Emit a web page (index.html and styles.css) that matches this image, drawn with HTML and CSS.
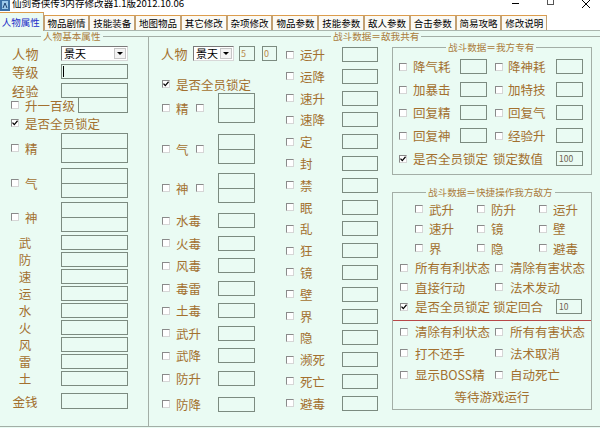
FILE: index.html
```html
<!DOCTYPE html>
<html lang="zh-CN">
<head>
  <meta charset="UTF-8" />
  <title>仙剑奇侠传3内存修改器</title>
  <link rel="stylesheet" href="styles.css">
</head>
<body>
  <div class="titlebar">
    <svg class="app-icon" width="10" height="11" viewBox="0 0 10 11">
      <rect width="10" height="11" fill="#3b6fa6"/>
      <rect x="2" y="1" width="6" height="8" fill="#9cc8ea"/>
      <path d="M3 8 5 3 7 8" stroke="#1d3f6e" fill="none"/>
    </svg>
    <span class="title">仙剑奇侠传3内存修改器1.1版2012.10.06</span>
    <div class="winbtns">
      <svg width="36" height="11"><path d="M12 3.5h7" stroke="#000"/></svg>
      <svg width="36" height="11"><rect x="11.5" y="-3.5" width="6" height="8" fill="none" stroke="#555"/></svg>
      <svg width="28" height="11"><path d="M10 0 18 8M18 0 10 8" stroke="#000"/></svg>
    </div>
  </div>

  <div class="tabs">
    <div class="tab active">人物属性</div>
    <div class="tab">物品剧情</div>
    <div class="tab">技能装备</div>
    <div class="tab">地图物品</div>
    <div class="tab">其它修改</div>
    <div class="tab">杂项修改</div>
    <div class="tab">物品参数</div>
    <div class="tab">技能参数</div>
    <div class="tab">敌人参数</div>
    <div class="tab">合击参数</div>
    <div class="tab">简易攻略</div>
    <div class="tab">修改说明</div>
  </div>

  <div class="panel">
    <fieldset class="grp base">
      <legend>人物基本属性</legend>
      <div class="base-body">
        <div class="row"><span class="name">人物</span><div class="combo w67"><span>景天</span><i class="drop"></i></div></div>
        <div class="row mt3"><span class="name">等级</span><div class="box w67"><i class="caret"></i></div></div>
        <div class="row mt4"><span class="name">经验</span><div class="box w67"></div></div>
        <div class="row up"><span class="cb"></span><span class="lbl">升一百级</span><div class="box"></div></div>
        <div class="row h16 mt2"><span class="cb on"><svg width="6" height="6"><path d="M.5 2.6 2.3 4.6 5.6.8" fill="none" stroke="#000" stroke-width="1.3"/></svg></span><span class="lbl">是否全员锁定</span></div>
        <div class="row pair mt2"><span class="cb"></span><span class="lbl">精</span><div class="dbl w67"><i></i><i></i></div></div>
        <div class="row pair mt5"><span class="cb"></span><span class="lbl">气</span><div class="dbl w67"><i></i><i></i></div></div>
        <div class="row pair mt4"><span class="cb"></span><span class="lbl">神</span><div class="dbl w67"><i></i><i></i></div></div>
        <div class="row stat mt3"><span class="lbl">武</span><div class="box w67"></div></div>
        <div class="row stat mt2"><span class="lbl">防</span><div class="box w67"></div></div>
        <div class="row stat mt2"><span class="lbl">速</span><div class="box w67"></div></div>
        <div class="row stat mt2"><span class="lbl">运</span><div class="box w67"></div></div>
        <div class="row stat mt2"><span class="lbl">水</span><div class="box w67"></div></div>
        <div class="row stat mt2"><span class="lbl">火</span><div class="box w67"></div></div>
        <div class="row stat mt2"><span class="lbl">风</span><div class="box w67"></div></div>
        <div class="row stat mt2"><span class="lbl">雷</span><div class="box w67"></div></div>
        <div class="row stat mt2"><span class="lbl">土</span><div class="box w67"></div></div>
        <div class="row stat h16 mt7"><span class="lbl">金钱</span><div class="box w67"></div></div>
      </div>
    </fieldset>

    <fieldset class="grp battle">
      <legend>战斗数据＝敌我共有</legend>
      <div class="battle-body">
        <div class="mid">
          <div class="row"><span class="name">人物</span><div class="combo c-role"><span>景天</span><i class="drop"></i></div><div class="box v5"><span class="val">5</span></div><div class="box v0"><span class="val">0</span></div></div>
          <div class="row h16 lock"><span class="cb on"><svg width="6" height="6"><path d="M.5 2.6 2.3 4.6 5.6.8" fill="none" stroke="#000" stroke-width="1.3"/></svg></span><span class="lbl">是否全员锁定</span></div>
          <div class="row pair mt1"><span class="cb"></span><span class="lbl">精</span><span class="cb cb2"></span><div class="dbl"><i></i><i></i></div></div>
          <div class="row pair mt11"><span class="cb"></span><span class="lbl">气</span><span class="cb cb2"></span><div class="dbl"><i></i><i></i></div></div>
          <div class="row pair mt9"><span class="cb"></span><span class="lbl">神</span><span class="cb cb2"></span><div class="dbl"><i></i><i></i></div></div>
          <div class="row one mt10"><span class="cb"></span><span class="lbl">水毒</span><div class="box"></div></div>
          <div class="row one"><span class="cb"></span><span class="lbl">火毒</span><div class="box"></div></div>
          <div class="row one"><span class="cb"></span><span class="lbl">风毒</span><div class="box"></div></div>
          <div class="row one"><span class="cb"></span><span class="lbl">毒雷</span><div class="box"></div></div>
          <div class="row one"><span class="cb"></span><span class="lbl">土毒</span><div class="box"></div></div>
          <div class="row one"><span class="cb"></span><span class="lbl">武升</span><div class="box"></div></div>
          <div class="row one"><span class="cb"></span><span class="lbl">武降</span><div class="box"></div></div>
          <div class="row one"><span class="cb"></span><span class="lbl">防升</span><div class="box"></div></div>
          <div class="row one mt11"><span class="cb"></span><span class="lbl">防降</span><div class="box"></div></div>
        </div>

        <div class="state">
          <div class="row"><span class="cb"></span><span class="lbl">运升</span><div class="box"></div></div>
          <div class="row"><span class="cb"></span><span class="lbl">运降</span><div class="box"></div></div>
          <div class="row"><span class="cb"></span><span class="lbl">速升</span><div class="box"></div></div>
          <div class="row"><span class="cb"></span><span class="lbl">速降</span><div class="box"></div></div>
          <div class="row"><span class="cb"></span><span class="lbl">定</span><div class="box"></div></div>
          <div class="row"><span class="cb"></span><span class="lbl">封</span><div class="box"></div></div>
          <div class="row"><span class="cb"></span><span class="lbl">禁</span><div class="box"></div></div>
          <div class="row"><span class="cb"></span><span class="lbl">眠</span><div class="box"></div></div>
          <div class="row"><span class="cb"></span><span class="lbl">乱</span><div class="box"></div></div>
          <div class="row"><span class="cb"></span><span class="lbl">狂</span><div class="box"></div></div>
          <div class="row"><span class="cb"></span><span class="lbl">镜</span><div class="box"></div></div>
          <div class="row"><span class="cb"></span><span class="lbl">壁</span><div class="box"></div></div>
          <div class="row"><span class="cb"></span><span class="lbl">界</span><div class="box"></div></div>
          <div class="row"><span class="cb"></span><span class="lbl">隐</span><div class="box"></div></div>
          <div class="row"><span class="cb"></span><span class="lbl">濒死</span><div class="box"></div></div>
          <div class="row"><span class="cb"></span><span class="lbl">死亡</span><div class="box"></div></div>
          <div class="row"><span class="cb"></span><span class="lbl">避毒</span><div class="box"></div></div>
        </div>

        <div class="side">
          <fieldset class="grp sub own">
            <legend>战斗数据＝我方专有</legend>
            <div class="own-body">
              <div class="row"><span class="cb"></span><span class="lbl">降气耗</span><div class="box"></div><span class="cb"></span><span class="lbl r">降神耗</span><div class="box"></div></div>
              <div class="row"><span class="cb"></span><span class="lbl">加暴击</span><div class="box"></div><span class="cb"></span><span class="lbl r">加特技</span><div class="box"></div></div>
              <div class="row"><span class="cb"></span><span class="lbl">回复精</span><div class="box"></div><span class="cb"></span><span class="lbl r">回复气</span><div class="box"></div></div>
              <div class="row"><span class="cb"></span><span class="lbl">回复神</span><div class="box"></div><span class="cb"></span><span class="lbl r">经验升</span><div class="box"></div></div>
              <div class="row"><span class="cb on"><svg width="6" height="6"><path d="M.5 2.6 2.3 4.6 5.6.8" fill="none" stroke="#000" stroke-width="1.3"/></svg></span><span class="lbl lk">是否全员锁定</span><span class="lk2">锁定数值</span><div class="box"><span class="val num">100</span></div></div>
            </div>
          </fieldset>

          <fieldset class="grp sub quick">
            <legend>战斗数据＝快捷操作我方敌方</legend>
            <div class="quick-body">
              <div class="row three"><span class="cell"><span class="cb"></span><span class="lbl">武升</span></span><span class="cell"><span class="cb"></span><span class="lbl">防升</span></span><span class="cell"><span class="cb"></span><span class="lbl">运升</span></span></div>
              <div class="row three"><span class="cell"><span class="cb"></span><span class="lbl">速升</span></span><span class="cell"><span class="cb"></span><span class="lbl">镜</span></span><span class="cell"><span class="cb"></span><span class="lbl">壁</span></span></div>
              <div class="row three"><span class="cell"><span class="cb"></span><span class="lbl">界</span></span><span class="cell"><span class="cb"></span><span class="lbl">隐</span></span><span class="cell"><span class="cb"></span><span class="lbl">避毒</span></span></div>
              <div class="row two"><span class="cell"><span class="cb"></span><span class="lbl">所有有利状态</span></span><span class="cell"><span class="cb"></span><span class="lbl">清除有害状态</span></span></div>
              <div class="row two"><span class="cell"><span class="cb"></span><span class="lbl">直接行动</span></span><span class="cell"><span class="cb"></span><span class="lbl">法术发动</span></span></div>
              <div class="row two"><span class="cb on"><svg width="6" height="6"><path d="M.5 2.6 2.3 4.6 5.6.8" fill="none" stroke="#000" stroke-width="1.3"/></svg></span><span class="lbl lk">是否全员锁定</span><span class="lk2">锁定回合</span><div class="box sm"><span class="val num">10</span></div></div>
              <div class="split"></div>
              <div class="row two tall"><span class="cell"><span class="cb"></span><span class="lbl">清除有利状态</span></span><span class="cell"><span class="cb"></span><span class="lbl">所有有害状态</span></span></div>
              <div class="row two tall"><span class="cell"><span class="cb"></span><span class="lbl">打不还手</span></span><span class="cell"><span class="cb"></span><span class="lbl">法术取消</span></span></div>
              <div class="row two tall"><span class="cell"><span class="cb"></span><span class="lbl">显示BOSS精</span></span><span class="cell"><span class="cb"></span><span class="lbl">自动死亡</span></span></div>
              <div class="row tall status">等待游戏运行</div>
            </div>
          </fieldset>
        </div>
      </div>
    </fieldset>
  </div>
</body>
</html>
```

FILE: styles.css
```css
* {
  box-sizing: border-box;
}

body {
  margin: 0;
  width: 600px;
  height: 428px;
  overflow: hidden;
  background: #fff;
  font-family: "Noto Sans CJK SC", "Noto Sans", sans-serif;
  color: #a3702f;
}

/* window title */
.titlebar {
  display: flex;
  align-items: flex-start;
  height: 11px;
  overflow: hidden;
  color: #000;
}
.app-icon { flex: none; }
.title {
  margin: -3px 0 0 2px;
  font-size: 9.6px;
  line-height: 12px;
  white-space: nowrap;
}
.winbtns {
  display: flex;
  margin-left: auto;
}

/* tab strip */
.tabs {
  display: flex;
  align-items: flex-end;
  height: 20px;
  margin-left: -2px;
  border-bottom: 1px solid #aab6ae;
}
.tab {
  flex: none;
  width: 45.8px;
  height: 15px;
  border: 1px solid #c2a072;
  border-top-color: #dc9c4c;
  border-bottom: 0;
  background: #fbfaf5;
  color: #000;
  font-size: 9.5px;
  line-height: 14px;
  text-align: center;
  white-space: nowrap;
}
.tab.active {
  width: 45.5px;
  height: 19px;
  margin-bottom: -1px;
  background: #eafbf3;
  color: #1c2fc8;
  line-height: 18px;
}

.panel {
  display: flex;
  height: 397px;
  margin-left: -1px;
  background: #eafbf3;
}

/* group boxes */
.grp {
  flex: none;
  margin: 0;
  padding: 0;
  min-width: 0;
  border: 1px solid #a3aea6;
}
.grp legend {
  padding: 0 2px;
  font-size: 9.6px;
  line-height: 10px;
  color: #ab7b3c;
  white-space: nowrap;
}
.base {
  width: 149px;
  height: 396px;
  border-right: 0;
}
.base legend { margin-left: 41px; }
.battle {
  width: 460px;
  height: 396px;
}
.battle legend { margin-left: 182px; }

/* generic rows and controls */
.row {
  display: flex;
  align-items: center;
  height: 15px;
  font-size: 12.5px;
  line-height: 13px;
  white-space: nowrap;
}
.row > * { flex: none; }
.h16 { height: 16px; }
.mt1 { margin-top: 1px; }
.mt2 { margin-top: 2px; }
.mt3 { margin-top: 3px; }
.mt4 { margin-top: 4px; }
.mt5 { margin-top: 5px; }
.mt7 { margin-top: 7px; }
.mt9 { margin-top: 9px; }
.mt10 { margin-top: 10px; }
.mt11 { margin-top: 11px; }

.cb {
  width: 8px;
  height: 8px;
  border: 1px solid;
  border-color: #8a8a8a #d6d6d6 #d6d6d6 #8a8a8a;
  background: #fff;
}
.cb svg { display: block; }
.cb + .lbl { margin-left: 6px; }

.box {
  align-self: stretch;
  border: 1px solid #7c8b80;
}
.dbl {
  display: flex;
  flex-direction: column;
  align-self: stretch;
  border: 1px solid #7c8b80;
}
.dbl i { flex: 1; }
.dbl i + i { border-top: 1px solid #7c8b80; }
.w67 { width: 67px; }

.caret {
  display: block;
  width: 1px;
  height: 11px;
  margin: 1px 0 0 1px;
  background: #000;
}
.val {
  display: block;
  padding-left: 1px;
  font-size: 9px;
  line-height: 13px;
  color: #b88a4c;
}
.val.num {
  padding-left: 2px;
  font-size: 8.5px;
  color: #6f6250;
}

.combo {
  display: flex;
  align-items: center;
  align-self: stretch;
  border: 1px solid;
  border-color: #7a7a7a #d8d8d8 #d8d8d8 #7a7a7a;
  background: #fff;
  color: #000;
  font-size: 11px;
}
.combo span {
  flex: 1;
  padding-left: 2px;
  line-height: 13px;
}
.drop {
  display: flex;
  align-items: center;
  justify-content: center;
  width: 12px;
  height: 11px;
  margin-right: 1px;
  border: 1px solid #c6c6c6;
  background: #f3f3f3;
}
.drop::after {
  content: "";
  border-left: 3px solid transparent;
  border-right: 3px solid transparent;
  border-top: 3px solid #000;
}

/* left column */
.base-body {
  display: flex;
  flex-direction: column;
  padding-top: 5px;
}
.name {
  margin-left: 12px;
  width: 49px;
  font-size: 13px;
  letter-spacing: 0.5px;
}
.base .cb { margin-left: 11px; }
.base .up {
  height: 16px;
  margin-top: -1px;
}
.up .lbl { width: 53px; }
.up .box { width: 50px; }
.base .pair { height: 30px; }
.base .pair .lbl { width: 36px; }
.stat .lbl {
  width: 26px;
  margin: 0 23px 0 12px;
  text-align: center;
}

/* battle area */
.battle-body { display: flex; }

.mid {
  display: flex;
  flex-direction: column;
  width: 131px;
  padding-top: 5px;
}
.mid .name { width: 32px; }
.c-role { width: 41px; }
.v5 { width: 16px; margin-left: 5px; }
.v0 { width: 15px; margin-left: 7px; }
.mid .cb { margin-left: 13px; }
.mid .lock { margin-top: 15px; }
.mid .pair { height: 30px; }
.mid .pair .lbl { width: 14px; }
.mid .cb2 { margin-left: 6px; margin-right: 14px; }
.mid .dbl { width: 37px; }
.mid .one { margin-top: 7.5px; }
.mid .one .lbl { width: 42px; }
.mid .one .box { width: 37px; }
.mid .mt10 { margin-top: 10px; }
.mid .mt11 { margin-top: 11px; }

.state {
  display: flex;
  flex-direction: column;
  width: 110px;
  padding-top: 6px;
}
.state .row + .row { margin-top: 6.8px; }
.state .cb { margin-left: 6px; }
.state .lbl { width: 42px; }
.state .box { width: 36px; }

.side {
  width: 202px;
  padding: 1px 0 0 2px;
}
.sub { width: 200px; }

.own { height: 133px; }
.own legend { margin-left: 53px; }
.own-body { padding-top: 7px; }
.own .row + .row { margin-top: 8px; }
.own .cb { margin-left: 6px; }
.own .lbl { width: 47px; }
.own .box { width: 27px; }
.own .box + .cb { margin-left: 8px; }
.own .cb + .lbl.r { margin-left: 5px; width: 48px; }
.lk { width: 80px; }
.lk2 { width: 63px; }
.own .lk { width: 80px; }

.quick { margin-top: 12px; }
.quick legend { margin-left: 33px; }
.quick-body { padding: 2.5px 0 2px; }
.quick .row { height: 19.5px; }
.quick .cell {
  display: flex;
  align-items: center;
}
.three { padding-left: 22px; }
.three .cell { width: 62px; }
.two { padding-left: 7px; }
.two .cell { width: 95px; }
.two .cb + .lbl { margin-left: 7px; }
.two .lk { width: 78px; }
.box.sm {
  align-self: center;
  width: 26px;
  height: 15px;
}
.split {
  margin-top: 3.5px;
  border-top: 1px solid #b84848;
}
.quick .tall { height: 21.5px; }
.status {
  justify-content: center;
}
```
